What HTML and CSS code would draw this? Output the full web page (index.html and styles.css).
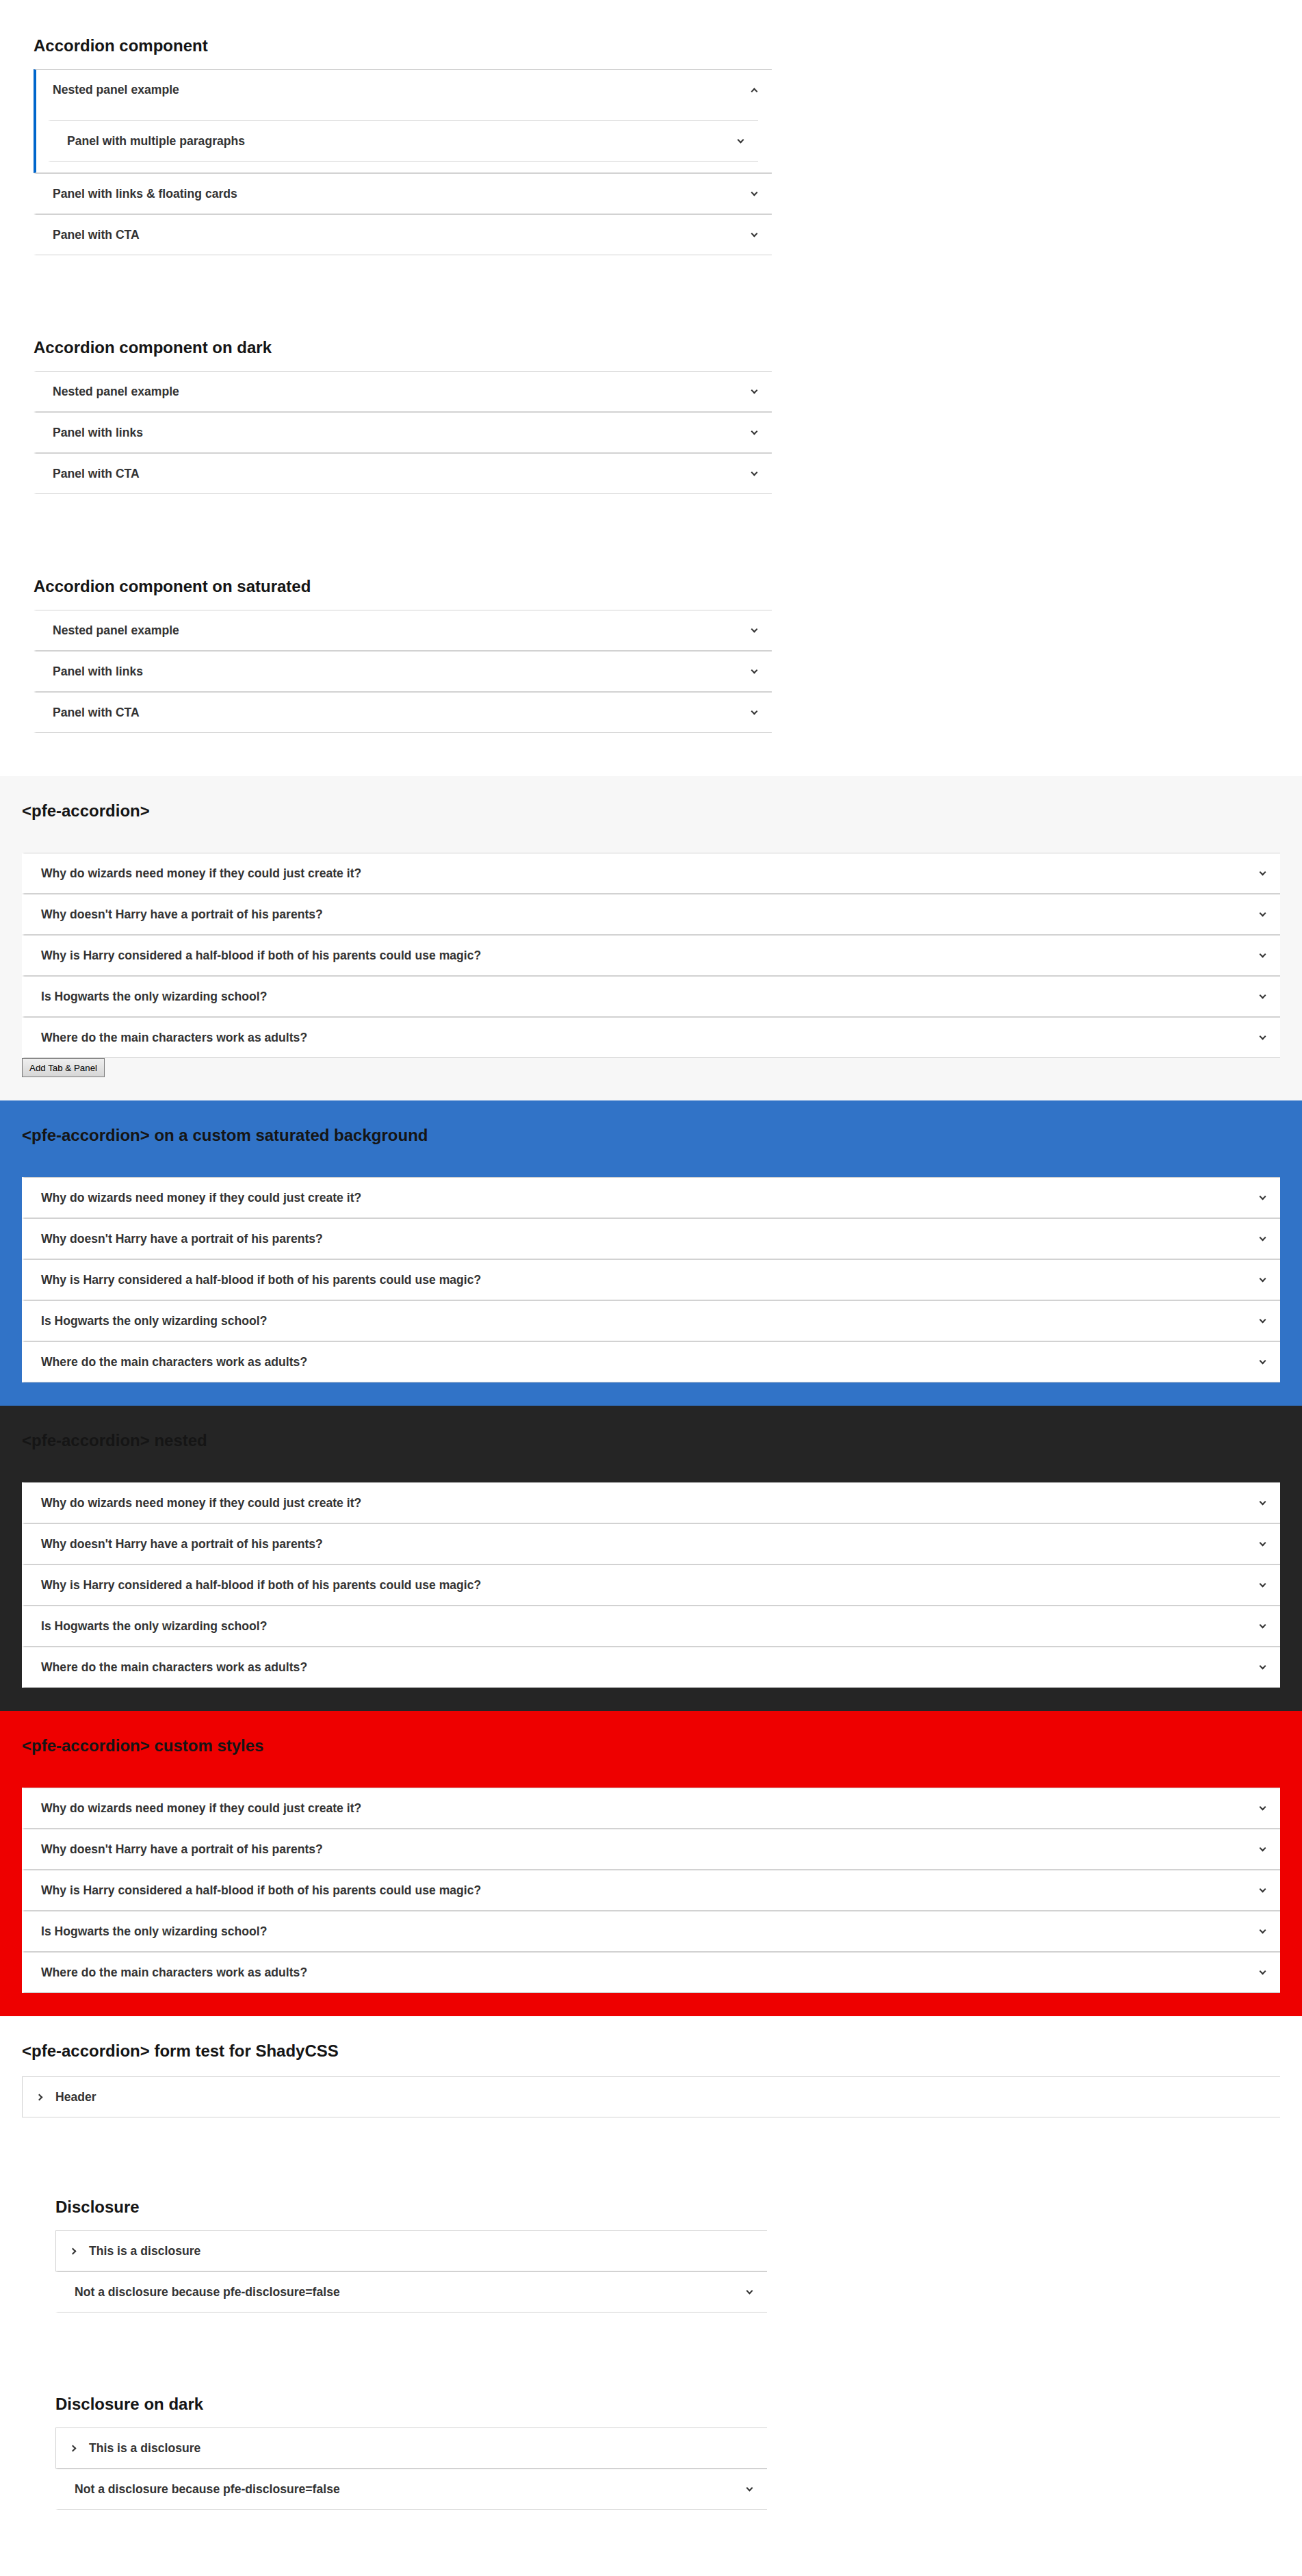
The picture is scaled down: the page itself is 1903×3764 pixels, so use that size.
FILE: index.html
```html
<!DOCTYPE html>
<html lang="en">
<head>
<meta charset="utf-8">
<title>pfe-accordion demo</title>
<link rel="stylesheet" href="styles.css">
</head>
<body>
<main class="intro">
  <section class="demo">
    <h2 class="demo-title">Accordion component</h2>
    <div class="accordion">
      <div class="acc-item is-open">
        <div class="acc-header"><span>Nested panel example</span><span class="chev chev-up"></span></div>
        <div class="acc-panel">
          <div class="accordion">
            <div class="acc-item">
              <div class="acc-header"><span>Panel with multiple paragraphs</span><span class="chev chev-down"></span></div>
            </div>
          </div>
        </div>
      </div>
      <div class="acc-item">
        <div class="acc-header"><span>Panel with links &amp; floating cards</span><span class="chev chev-down"></span></div>
      </div>
      <div class="acc-item">
        <div class="acc-header"><span>Panel with CTA</span><span class="chev chev-down"></span></div>
      </div>
    </div>
  </section>

  <section class="demo">
    <h2 class="demo-title">Accordion component on dark</h2>
    <div class="accordion">
      <div class="acc-item"><div class="acc-header"><span>Nested panel example</span><span class="chev chev-down"></span></div></div>
      <div class="acc-item"><div class="acc-header"><span>Panel with links</span><span class="chev chev-down"></span></div></div>
      <div class="acc-item"><div class="acc-header"><span>Panel with CTA</span><span class="chev chev-down"></span></div></div>
    </div>
  </section>

  <section class="demo">
    <h2 class="demo-title">Accordion component on saturated</h2>
    <div class="accordion">
      <div class="acc-item"><div class="acc-header"><span>Nested panel example</span><span class="chev chev-down"></span></div></div>
      <div class="acc-item"><div class="acc-header"><span>Panel with links</span><span class="chev chev-down"></span></div></div>
      <div class="acc-item"><div class="acc-header"><span>Panel with CTA</span><span class="chev chev-down"></span></div></div>
    </div>
  </section>
</main>

<section class="band band-light">
  <h2 class="band-title">&lt;pfe-accordion&gt;</h2>
  <div class="accordion">
    <div class="acc-item"><div class="acc-header"><span>Why do wizards need money if they could just create it?</span><span class="chev chev-down"></span></div></div>
    <div class="acc-item"><div class="acc-header"><span>Why doesn't Harry have a portrait of his parents?</span><span class="chev chev-down"></span></div></div>
    <div class="acc-item"><div class="acc-header"><span>Why is Harry considered a half-blood if both of his parents could use magic?</span><span class="chev chev-down"></span></div></div>
    <div class="acc-item"><div class="acc-header"><span>Is Hogwarts the only wizarding school?</span><span class="chev chev-down"></span></div></div>
    <div class="acc-item"><div class="acc-header"><span>Where do the main characters work as adults?</span><span class="chev chev-down"></span></div></div>
  </div>
  <button class="add-btn" type="button">Add Tab &amp; Panel</button>
</section>

<section class="band band-blue">
  <h2 class="band-title">&lt;pfe-accordion&gt; on a custom saturated background</h2>
  <div class="accordion">
    <div class="acc-item"><div class="acc-header"><span>Why do wizards need money if they could just create it?</span><span class="chev chev-down"></span></div></div>
    <div class="acc-item"><div class="acc-header"><span>Why doesn't Harry have a portrait of his parents?</span><span class="chev chev-down"></span></div></div>
    <div class="acc-item"><div class="acc-header"><span>Why is Harry considered a half-blood if both of his parents could use magic?</span><span class="chev chev-down"></span></div></div>
    <div class="acc-item"><div class="acc-header"><span>Is Hogwarts the only wizarding school?</span><span class="chev chev-down"></span></div></div>
    <div class="acc-item"><div class="acc-header"><span>Where do the main characters work as adults?</span><span class="chev chev-down"></span></div></div>
  </div>
</section>

<section class="band band-dark">
  <h2 class="band-title">&lt;pfe-accordion&gt; nested</h2>
  <div class="accordion">
    <div class="acc-item"><div class="acc-header"><span>Why do wizards need money if they could just create it?</span><span class="chev chev-down"></span></div></div>
    <div class="acc-item"><div class="acc-header"><span>Why doesn't Harry have a portrait of his parents?</span><span class="chev chev-down"></span></div></div>
    <div class="acc-item"><div class="acc-header"><span>Why is Harry considered a half-blood if both of his parents could use magic?</span><span class="chev chev-down"></span></div></div>
    <div class="acc-item"><div class="acc-header"><span>Is Hogwarts the only wizarding school?</span><span class="chev chev-down"></span></div></div>
    <div class="acc-item"><div class="acc-header"><span>Where do the main characters work as adults?</span><span class="chev chev-down"></span></div></div>
  </div>
</section>

<section class="band band-red">
  <h2 class="band-title">&lt;pfe-accordion&gt; custom styles</h2>
  <div class="accordion">
    <div class="acc-item"><div class="acc-header"><span>Why do wizards need money if they could just create it?</span><span class="chev chev-down"></span></div></div>
    <div class="acc-item"><div class="acc-header"><span>Why doesn't Harry have a portrait of his parents?</span><span class="chev chev-down"></span></div></div>
    <div class="acc-item"><div class="acc-header"><span>Why is Harry considered a half-blood if both of his parents could use magic?</span><span class="chev chev-down"></span></div></div>
    <div class="acc-item"><div class="acc-header"><span>Is Hogwarts the only wizarding school?</span><span class="chev chev-down"></span></div></div>
    <div class="acc-item"><div class="acc-header"><span>Where do the main characters work as adults?</span><span class="chev chev-down"></span></div></div>
  </div>
</section>

<section class="form-test">
  <h2 class="form-title">&lt;pfe-accordion&gt; form test for ShadyCSS</h2>
  <div class="accordion">
    <div class="acc-item disclosure">
      <div class="acc-header disc-header"><span class="chev chev-right"></span><span>Header</span></div>
    </div>
  </div>
</section>

<main class="disclosures">
  <section class="demo">
    <h2 class="demo-title">Disclosure</h2>
    <div class="accordion">
      <div class="acc-item disclosure">
        <div class="acc-header disc-header"><span class="chev chev-right"></span><span>This is a disclosure</span></div>
      </div>
      <div class="acc-item">
        <div class="acc-header"><span>Not a disclosure because pfe-disclosure=false</span><span class="chev chev-down"></span></div>
      </div>
    </div>
  </section>
  <section class="demo">
    <h2 class="demo-title">Disclosure on dark</h2>
    <div class="accordion">
      <div class="acc-item disclosure">
        <div class="acc-header disc-header"><span class="chev chev-right"></span><span>This is a disclosure</span></div>
      </div>
      <div class="acc-item">
        <div class="acc-header"><span>Not a disclosure because pfe-disclosure=false</span><span class="chev chev-down"></span></div>
      </div>
    </div>
  </section>
</main>
</body>
</html>
```

FILE: styles.css
```css
* {
  box-sizing: border-box;
}

body {
  margin: 0;
  background: #fff;
  font-family: "Liberation Sans", Arial, sans-serif;
  color: #151515;
}

/* ---------- top demo group ---------- */
.intro {
  display: flex;
  flex-direction: column;
  gap: 120px;
  padding: 52px 0 63px 49px;
}

.demo {
  width: 1079px;
}

.demo-title,
.band-title,
.form-title {
  margin: 0;
  font-size: 24px;
  line-height: 29px;
  font-weight: 700;
  color: #151515;
}

.demo-title {
  margin-bottom: 20px;
}

/* ---------- accordion ---------- */
.accordion {
  background: #fff;
}

.acc-item {
  border-top: 1px solid #d2d2d2;
  border-bottom: 1px solid #d2d2d2;
  border-left: 4px solid transparent;
}

.acc-item.is-open {
  border-left-color: #0066cc;
}

.acc-header {
  display: flex;
  align-items: center;
  justify-content: space-between;
  padding: 18px 22px 18px 24px;
  font-size: 17.6px;
  line-height: 22px;
  font-weight: 700;
  color: #333;
}

.acc-panel {
  padding: 16px 20px 16px 17px;
}

.chev {
  flex: none;
  display: block;
  width: 7px;
  height: 7px;
  border-right: 2px solid #333;
  border-bottom: 2px solid #333;
}

.chev-down {
  transform: translateY(-2px) rotate(45deg);
}

.chev-up {
  transform: translateY(2px) rotate(-135deg);
}

.chev-right {
  transform: rotate(-45deg);
}

/* disclosure variant */
.acc-item.disclosure {
  border-left: 1px solid #d2d2d2;
}

.disc-header {
  justify-content: flex-start;
  gap: 20px;
  padding-left: 21px;
}

/* ---------- full-width bands ---------- */
.band {
  padding: 36px 32px 34px;
}

.band-title {
  margin-bottom: 47px;
}

.band-light {
  background: #f7f7f7;
}

.band-blue {
  background: #3173c7;
}

.band-dark {
  background: #252525;
}

.band-red {
  background: #ee0000;
}

.add-btn {
  display: block;
  height: 28px;
  padding: 0 10px;
  font-family: "Liberation Sans", Arial, sans-serif;
  font-size: 13.33px;
  color: #000;
  background: linear-gradient(#efefef, #d6d6d6);
  border: 1px solid #767676;
  border-radius: 0;
}

/* ---------- form test ---------- */
.form-test {
  padding: 36px 32px 0;
}

.form-title {
  margin-bottom: 23px;
}

/* ---------- disclosures ---------- */
.disclosures {
  display: flex;
  flex-direction: column;
  gap: 119px;
  padding: 116px 0 97px 81px;
}

.disclosures .demo {
  width: 1040px;
}
```
